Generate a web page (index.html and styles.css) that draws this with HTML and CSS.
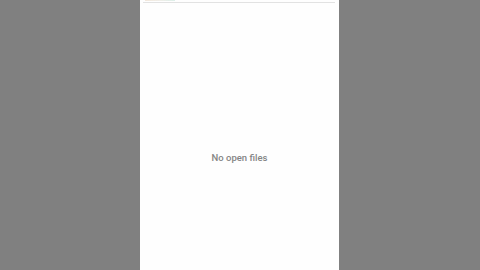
FILE: index.html
```html
<html>

<head>
  <meta name="viewport" content="width=device-width, initial-scale=1.0">
  <link rel="stylesheet" href="styles.css">
</head>

<body>
  <div class="screen">
    <div class="tabbar">
      <span class="tab-peek"></span>
    </div>
    <div class="empty">
      <p>No open files</p>
    </div>
  </div>
</body>

</html>
```

FILE: styles.css
```css
body {
  margin: 0;
  background-color: #808080;
  font-family: Roboto, "Liberation Sans", sans-serif;
  height: 270px;
  overflow: hidden;
}

.screen {
  width: 199px;
  height: 270px;
  margin: 0 0 0 140px;
  background-color: #fefefe;
  display: flex;
  flex-direction: column;
}

.tabbar {
  margin: 0 4px 0 3px;
  height: 2px;
  border-bottom: 1px solid #e2e2e2;
  position: relative;
}

.tab-peek {
  position: absolute;
  left: 2px;
  top: 0;
  width: 30px;
  height: 1px;
  background: linear-gradient(90deg, #f3e8dc, #f0eee8 50%, #dcefe9);
}

.empty {
  flex: 1;
  display: flex;
  align-items: center;
  justify-content: center;
  padding-top: 42px;
}

.empty p {
  margin: 0;
  font-size: 9.5px;
  font-weight: 500;
  color: #858585;
}
```
